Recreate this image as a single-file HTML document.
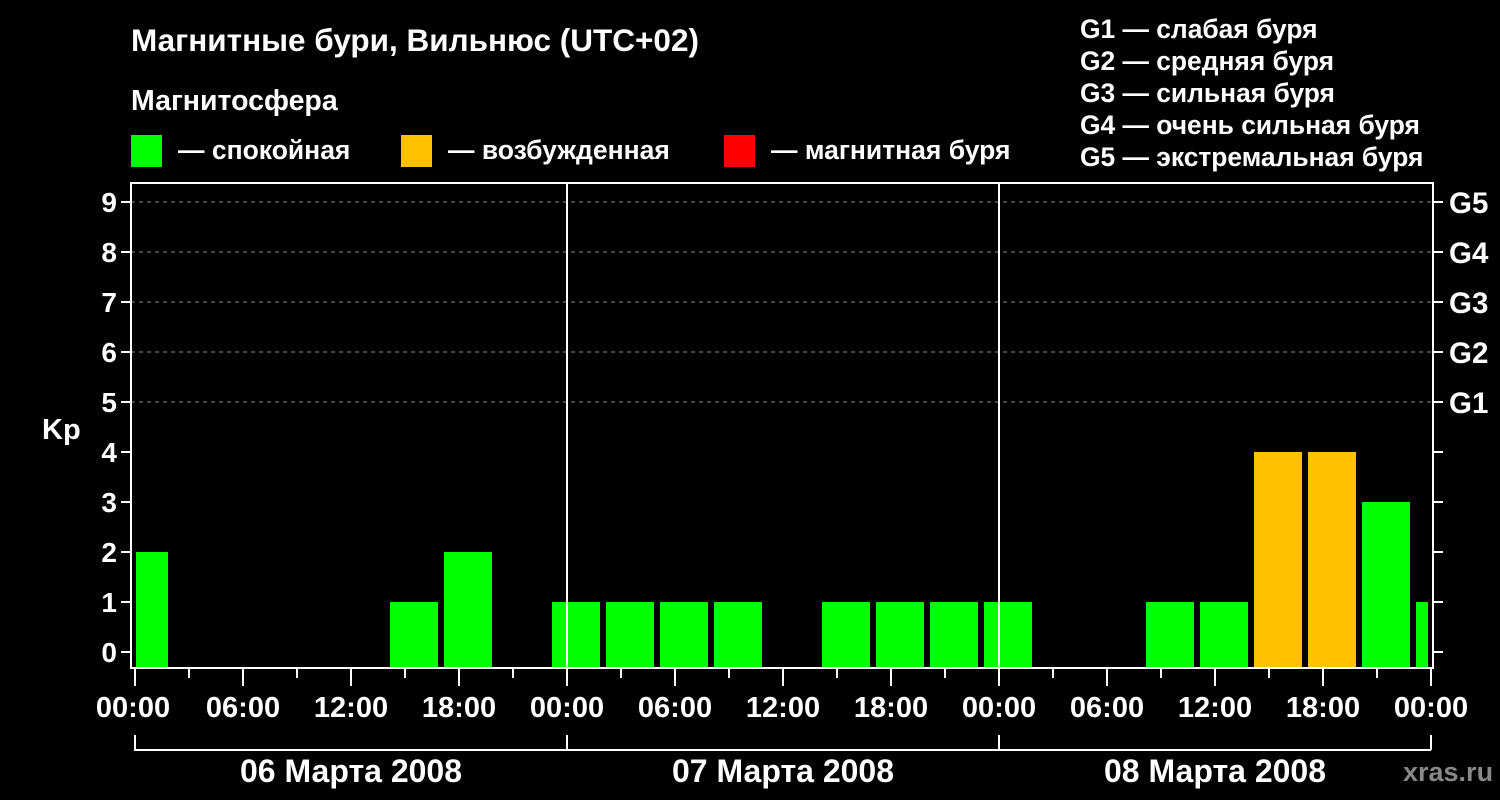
<!DOCTYPE html>
<html><head><meta charset="utf-8"><style>
html,body{margin:0;padding:0;background:#000;width:1500px;height:800px;overflow:hidden}
svg{display:block}
text{font-family:"Liberation Sans",Arial,sans-serif;font-weight:bold;fill:#fff}
</style></head><body>
<svg width="1500" height="800" viewBox="0 0 1500 800">
<text x="131" y="51" font-size="31.5">Магнитные бури, Вильнюс (UTC+02)</text>
<text x="131" y="110" font-size="28.5">Магнитосфера</text>
<rect x="131" y="135" width="31" height="32" fill="#00ff00"/>
<text x="178" y="159" font-size="26.5">— спокойная</text>
<rect x="401" y="135" width="31" height="32" fill="#ffc000"/>
<text x="448" y="159" font-size="26.5">— возбужденная</text>
<rect x="724" y="135" width="31" height="32" fill="#ff0000"/>
<text x="771" y="159" font-size="26.5">— магнитная буря</text>
<g font-size="26.4">
<text x="1080" y="38">G1 — слабая буря</text>
<text x="1080" y="70">G2 — средняя буря</text>
<text x="1080" y="102">G3 — сильная буря</text>
<text x="1080" y="134">G4 — очень сильная буря</text>
<text x="1080" y="166">G5 — экстремальная буря</text>
</g>
<g stroke="#888" stroke-dasharray="4,4" stroke-width="1">
<line x1="131" y1="202" x2="1433" y2="202"/><line x1="131" y1="252" x2="1433" y2="252"/>
<line x1="131" y1="302" x2="1433" y2="302"/><line x1="131" y1="352" x2="1433" y2="352"/>
<line x1="131" y1="402" x2="1433" y2="402"/>
</g>
<g fill="#00ff00">
<rect x="136" y="552" width="32" height="116"/>
<rect x="390" y="602" width="48" height="66"/>
<rect x="444" y="552" width="48" height="116"/>
<rect x="552" y="602" width="48" height="66"/>
<rect x="606" y="602" width="48" height="66"/>
<rect x="660" y="602" width="48" height="66"/>
<rect x="714" y="602" width="48" height="66"/>
<rect x="822" y="602" width="48" height="66"/>
<rect x="876" y="602" width="48" height="66"/>
<rect x="930" y="602" width="48" height="66"/>
<rect x="984" y="602" width="48" height="66"/>
<rect x="1146" y="602" width="48" height="66"/>
<rect x="1200" y="602" width="48" height="66"/>
<rect x="1362" y="502" width="48" height="166"/>
<rect x="1416" y="602" width="12" height="66"/>
</g>
<g fill="#ffc000">
<rect x="1254" y="452" width="48" height="216"/>
<rect x="1308" y="452" width="48" height="216"/>
</g>
<g stroke="#fff" stroke-width="2" fill="none">
<rect x="131" y="183" width="1302" height="485"/>
<line x1="567" y1="183" x2="567" y2="668"/>
<line x1="999" y1="183" x2="999" y2="668"/>
<path d="M121 202H131M121 252H131M121 302H131M121 352H131M121 402H131M121 452H131M121 502H131M121 552H131M121 602H131M121 652H131"/>
<path d="M1433 202H1443M1433 252H1443M1433 302H1443M1433 352H1443M1433 402H1443M1433 452H1443M1433 502H1443M1433 552H1443M1433 602H1443M1433 652H1443"/>
<path d="M135 668V686M243 668V686M351 668V686M459 668V686M567 668V686M675 668V686M783 668V686M891 668V686M999 668V686M1107 668V686M1215 668V686M1323 668V686M1431 668V686"/>
<path d="M189 668V678M297 668V678M405 668V678M513 668V678M621 668V678M729 668V678M837 668V678M945 668V678M1053 668V678M1161 668V678M1269 668V678M1377 668V678"/>
<path d="M135 735V750H1431M567 735V750M999 735V750M1431 735V750"/>
</g>
<g font-size="28" text-anchor="end">
<text x="117" y="212">9</text><text x="117" y="262">8</text><text x="117" y="312">7</text><text x="117" y="362">6</text><text x="117" y="412">5</text>
<text x="117" y="462">4</text><text x="117" y="512">3</text><text x="117" y="562">2</text><text x="117" y="612">1</text><text x="117" y="662">0</text>
</g>
<text x="42" y="439" font-size="29">Kp</text>
<g font-size="29.5">
<text x="1449" y="213">G5</text><text x="1449" y="263">G4</text><text x="1449" y="313">G3</text><text x="1449" y="363">G2</text><text x="1449" y="413">G1</text>
</g>
<g font-size="29" text-anchor="middle">
<text x="133" y="717">00:00</text><text x="243" y="717">06:00</text><text x="351" y="717">12:00</text><text x="459" y="717">18:00</text>
<text x="567" y="717">00:00</text><text x="675" y="717">06:00</text><text x="783" y="717">12:00</text><text x="891" y="717">18:00</text>
<text x="999" y="717">00:00</text><text x="1107" y="717">06:00</text><text x="1215" y="717">12:00</text><text x="1323" y="717">18:00</text>
<text x="1431" y="717">00:00</text>
<text x="351" y="782" font-size="32">06 Марта 2008</text>
<text x="783" y="782" font-size="32">07 Марта 2008</text>
<text x="1215" y="782" font-size="32">08 Марта 2008</text>
</g>
<text x="1403" y="781" font-size="27" style="fill:#888">xras.ru</text>
</svg>
</body></html>
